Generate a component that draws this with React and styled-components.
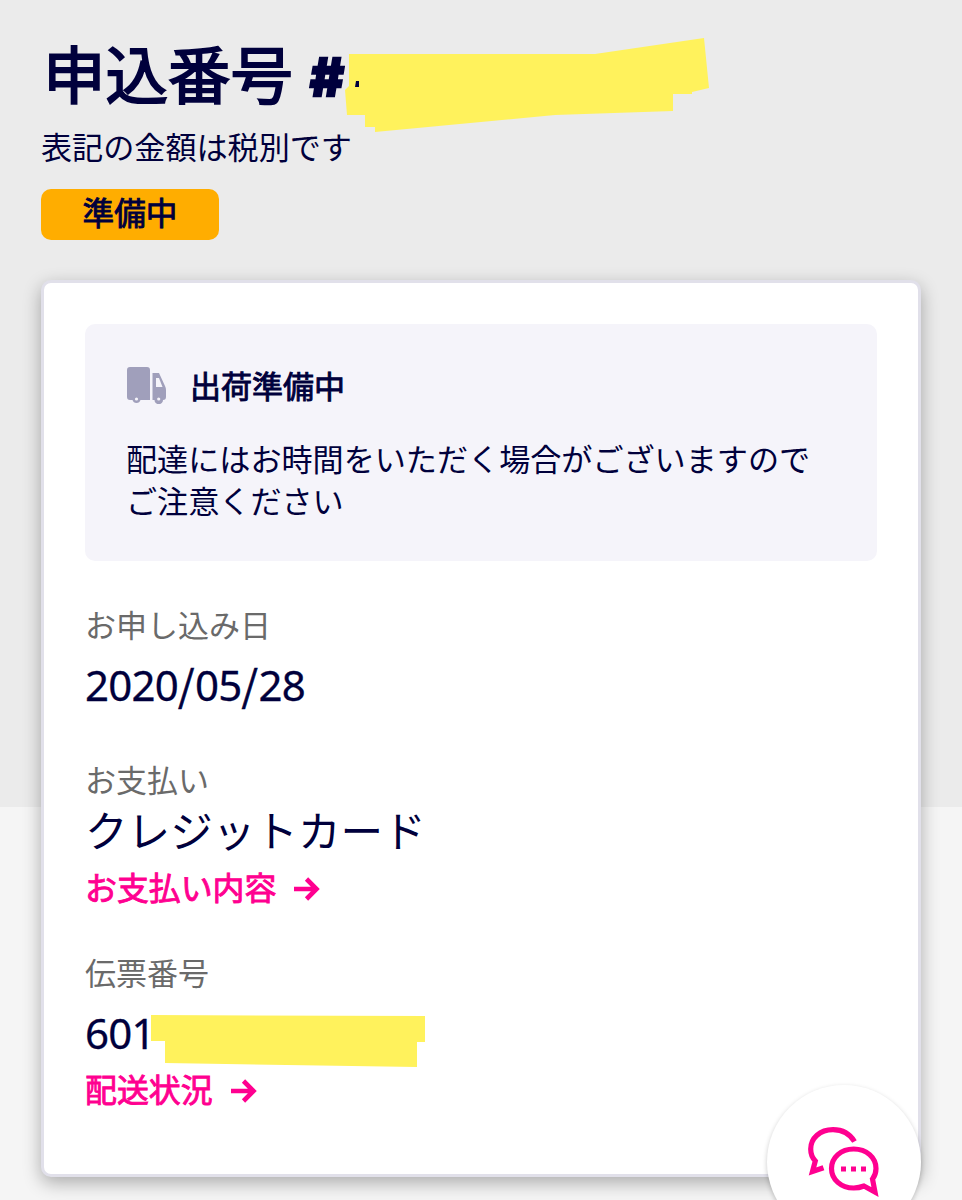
import React from 'react';
import styled, { createGlobalStyle } from 'styled-components';

const GlobalStyle = createGlobalStyle`
  * {
    box-sizing: border-box;
  }
  body {
    margin: 0;
    background: #f5f5f5;
    color: #00003c;
    font-family: "Noto Sans CJK JP", sans-serif;
  }
  h1, h2, p {
    margin: 0;
  }
`;

const Page = styled.main`
  position: relative;
  height: 1200px;
  padding: 34px 41px 0;
  overflow: hidden;
  background: linear-gradient(#ebebeb 807px, #f5f5f5 807px);
`;

const Title = styled.h1`
  position: relative;
  display: flex;
  gap: 17px;
  height: 76px;
  padding-left: 2px;
  line-height: 76px;
  font-size: 62.5px;
  font-weight: 400;
  white-space: nowrap;
  -webkit-text-stroke: 1.9px #00003c;
`;

const Hash = styled.span`
  margin-top: 6px;
  font-family: Inter, sans-serif;
  font-size: 52px;
  font-weight: 800;
  -webkit-text-stroke: 2.6px #00003c;
`;

const TaxNote = styled.p`
  height: 62px;
  margin-top: 5px;
  line-height: 62px;
  font-size: 31.1px;
`;

const Badge = styled.div`
  display: flex;
  justify-content: center;
  width: 178px;
  height: 51px;
  margin-top: 12px;
  border-radius: 10px;
  background: #ffad00;
  font-size: 31.6px;
  line-height: 45px;
  -webkit-text-stroke: 0.9px #00003c;
`;

const Card = styled.section`
  height: 897px;
  margin-top: 40px;
  padding: 41px 41px 0;
  border: 3px solid #e1e0ea;
  border-radius: 10px;
  background: #fff;
  box-shadow: 0 6px 18px rgba(0, 0, 0, 0.3);
`;

const Notice = styled.div`
  height: 237px;
  padding: 40px 41px 0;
  border-radius: 10px;
  background: #f5f4fa;
  font-size: 31.1px;
`;

const NoticeHead = styled.div`
  display: flex;
  align-items: center;
  gap: 23px;
  height: 41px;
`;

const NoticeTitle = styled.h2`
  font-size: 31px;
  font-weight: 400;
  line-height: 40px;
  -webkit-text-stroke: 0.9px #00003c;
`;

const NoticeText = styled.p`
  margin-top: 32px;
  line-height: 42px;
`;

const Field = styled.div`
  display: flex;
  flex-direction: column;
  align-items: flex-start;
  margin-top: ${(props) => props.$top}px;
`;

const Label = styled.span`
  height: 46px;
  color: #6a6a6a;
  font-size: 31px;
  line-height: 46px;
`;

const Value = styled.span`
  position: relative;
  height: 56px;
  margin: ${(props) => props.$top}px 0 ${(props) => props.$bottom}px;
  font-size: ${(props) => props.$size || 42}px;
  line-height: 56px;
`;

const Digits = styled.span`
  font-family: "Noto Sans", sans-serif;
  letter-spacing: -0.8px;
  line-height: 0;
  -webkit-text-stroke: 0.3px #00003c;
`;

const Slash = styled.span`
  letter-spacing: 0.6px;
  -webkit-text-stroke: 0.6px #00003c;
`;

const Link = styled.a`
  display: flex;
  align-items: center;
  gap: 18px;
  height: 46px;
  margin-top: ${(props) => props.$top}px;
  color: #ff0090;
  font-size: 31.9px;
  line-height: 46px;
  -webkit-text-stroke: 0.9px #ff0090;

  svg {
    margin-top: 6px;
  }
`;

const TitleMarker = styled.svg`
  position: absolute;
  left: 304px;
  top: 4px;
`;

const NumberMarker = styled.svg`
  position: absolute;
  left: 65px;
  top: 12px;
`;

const ChatButton = styled.button`
  position: absolute;
  left: 767px;
  top: 1085px;
  width: 154px;
  height: 154px;
  padding: 0;
  border: 0;
  border-radius: 50%;
  background: #fff;
  box-shadow: 0 2px 5px rgba(0, 0, 0, 0.22);
`;

const ChatSvg = styled.svg`
  position: absolute;
  left: 40px;
  top: 40px;
`;

const TruckIcon = () => (
  <svg width="41" height="38" viewBox="0 0 41 38" fill="#a09fbb">
    <path d="M4 1H21Q24 1 24 4V34H14.500A4.200 4.200 0 0 1 6.500 34H4Q1 34 1 31V4Q1 1 4 1Z" />
    <path d="M26.500 7H33L39 20Q40 22 40 24V31Q40 34 37 34A4.200 4.200 0 0 1 28.500 34H26.500Z" />
    <path d="M30 12H33L36.500 21H30Z" fill="#f5f4fa" />
    <circle cx="10.500" cy="33" r="1.600" fill="#f5f4fa" />
    <circle cx="32.700" cy="33" r="1.600" fill="#f5f4fa" />
  </svg>
);

const ArrowIcon = () => (
  <svg width="26" height="24" viewBox="0 0 26 24" fill="none" stroke="#ff0090" strokeWidth="4.6">
    <path d="M0 12H23M12.500 2L22.500 12L12.500 22" />
  </svg>
);

const ChatIcon = () => (
  <ChatSvg width="76" height="76" viewBox="0 0 76 76" fill="none" stroke="#ff0090" strokeWidth="5.2">
    <path d="M47.500 16.500C43 9 35 4.600 26 4.600C13 4.600 3.700 13 3.700 24C3.700 29 5 32.500 8.300 36L5.500 46.500L16.500 42.700" />
    <path d="M65.500 54L68 67L57 61C53.500 62.400 50 63 46.700 63C34 63 24.500 54.500 24.500 43.500C24.500 32.500 34 24 46.700 24C59.500 24 69 32.500 69 43.500C69 47.500 67.800 51 65.500 54Z" />
    <path d="M34 44H39M44 44H49M54 44H59" />
  </ChatSvg>
);

export default function App() {
  return (
    <>
      <GlobalStyle />
      <Page>
        <Title>
          申込番号
          <Hash>#</Hash>
          <TitleMarker width="366" height="96" viewBox="0 0 366 96">
            <path
              d="M4 16L250 16L359 0L364 50L347 54V56H328V73L210 77L30 94V89H20V77H2L0 52L4 48Z"
              fill="#fff25c"
            />
            <path d="M11 43H14V49H10Z" fill="#00003c" />
          </TitleMarker>
        </Title>
        <TaxNote>表記の金額は税別です</TaxNote>
        <Badge>準備中</Badge>
        <Card>
          <Notice>
            <NoticeHead>
              <TruckIcon />
              <NoticeTitle>出荷準備中</NoticeTitle>
            </NoticeHead>
            <NoticeText>
              配達にはお時間をいただく場合がございますので
              <br />
              ご注意ください
            </NoticeText>
          </Notice>
          <Field $top={40}>
            <Label>お申し込み日</Label>
            <Value $top={8} $bottom={4}>
              <Digits>2020</Digits>
              <Slash>/</Slash>
              <Digits>05</Digits>
              <Slash>/</Slash>
              <Digits>28</Digits>
            </Value>
          </Field>
          <Field $top={41}>
            <Label>お支払い</Label>
            <Value $top={-1} $bottom={1} $size={42.6}>クレジットカード</Value>
            <Link $top={5}>
              お支払い内容
              <ArrowIcon />
            </Link>
          </Field>
          <Field $top={40}>
            <Label>伝票番号</Label>
            <Value $top={8} $bottom={4}>
              <Digits>601</Digits>
              <NumberMarker width="276" height="54" viewBox="0 0 276 54">
                <path d="M1 0L275 1V27H267V52L15 48V26H1Z" fill="#fff25c" />
              </NumberMarker>
            </Value>
            <Link $top={2}>
              配送状況
              <ArrowIcon />
            </Link>
          </Field>
        </Card>
        <ChatButton aria-label="チャット">
          <ChatIcon />
        </ChatButton>
      </Page>
    </>
  );
}
